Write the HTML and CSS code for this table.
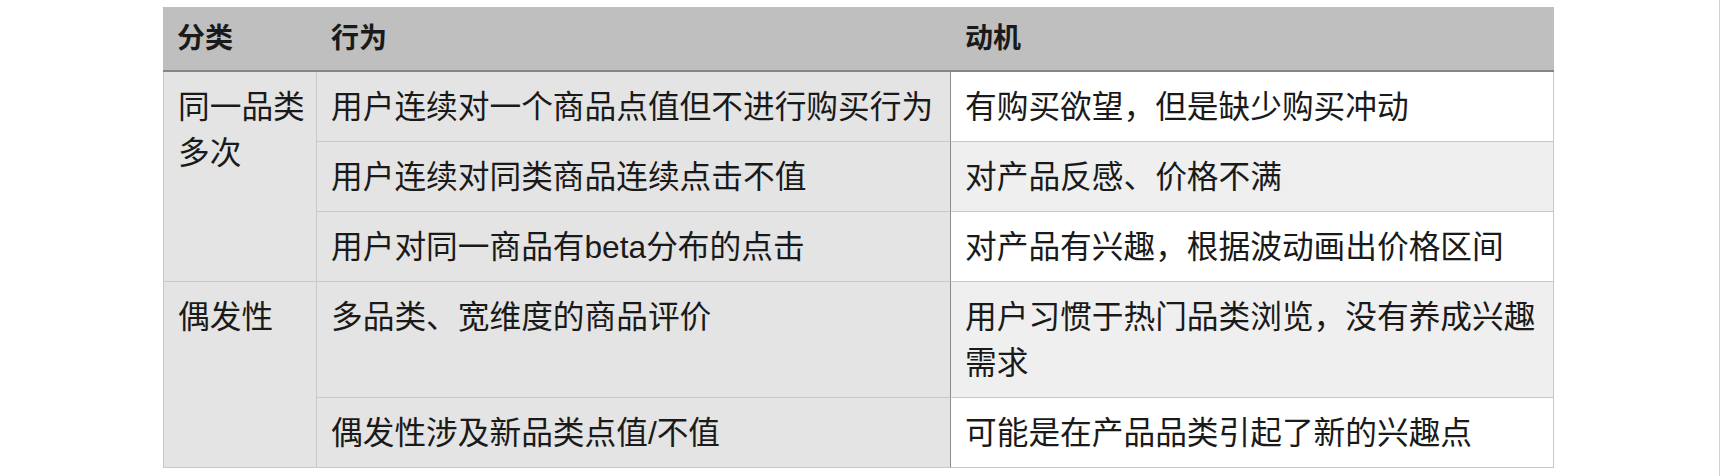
FILE: index.html
```html
<!DOCTYPE html>
<html lang="zh-CN">
<head>
<meta charset="utf-8">
<title>用户行为分类</title>
<link rel="stylesheet" href="styles.css">
</head>
<body>
<div class="page">
  <table class="grid">
    <colgroup>
      <col class="c1">
      <col class="c2">
      <col class="c3">
    </colgroup>
    <thead>
      <tr>
        <th>分类</th>
        <th>行为</th>
        <th>动机</th>
      </tr>
    </thead>
    <tbody>
      <tr>
        <td class="cat" rowspan="3">同一品类多次</td>
        <td class="act">用户连续对一个商品点值但不进行购买行为</td>
        <td class="mot">有购买欲望，但是缺少购买冲动</td>
      </tr>
      <tr>
        <td class="act">用户连续对同类商品连续点击不值</td>
        <td class="mot alt">对产品反感、价格不满</td>
      </tr>
      <tr>
        <td class="act">用户对同一商品有beta分布的点击</td>
        <td class="mot">对产品有兴趣，根据波动画出价格区间</td>
      </tr>
      <tr>
        <td class="cat" rowspan="2">偶发性</td>
        <td class="act">多品类、宽维度的商品评价</td>
        <td class="mot alt">用户习惯于热门品类浏览，没有养成兴趣需求</td>
      </tr>
      <tr>
        <td class="act">偶发性涉及新品类点值/不值</td>
        <td class="mot">可能是在产品品类引起了新的兴趣点</td>
      </tr>
    </tbody>
  </table>
</div>
</body>
</html>
```

FILE: styles.css
```css
html, body {
  margin: 0;
  padding: 0;
  background: #ffffff;
}

.page {
  box-sizing: border-box;
  width: 1720px;
  height: 476px;
  padding: 7px 0 0 163px;
  border-right: 1px solid #d0d0d0;
}

.grid {
  border-collapse: separate;
  border-spacing: 0;
  table-layout: fixed;
  width: 1391px;
  font-family: "Liberation Sans", "Noto Sans CJK SC", sans-serif;
  color: #1a1a1a;
}

.c1 { width: 154px; }
.c2 { width: 634px; }
.c3 { width: 603px; }

.grid th {
  background: #bebfbe;
  height: 63px;
  padding: 0 14px;
  font-size: 28px;
  font-weight: bold;
  text-align: left;
  line-height: 63px;
  border-bottom: 2px solid #858585;
}

.grid td {
  padding: 12px 6px 11px 14px;
  font-size: 31.7px;
  font-weight: 400;
  line-height: 46px;
  vertical-align: top;
  text-align: left;
  border-bottom: 1px solid #c8c8c8;
}

.cat {
  background: #e3e4e3;
  border-left: 1px solid #c8c8c8;
  border-right: 1px solid #c8c8c8;
}

.act {
  background: #e3e4e3;
  border-right: 1px solid #8a8a8a;
}

.mot {
  background: #ffffff;
  border-right: 1px solid #c8c8c8;
}

.mot.alt {
  background: #efefef;
}
```
